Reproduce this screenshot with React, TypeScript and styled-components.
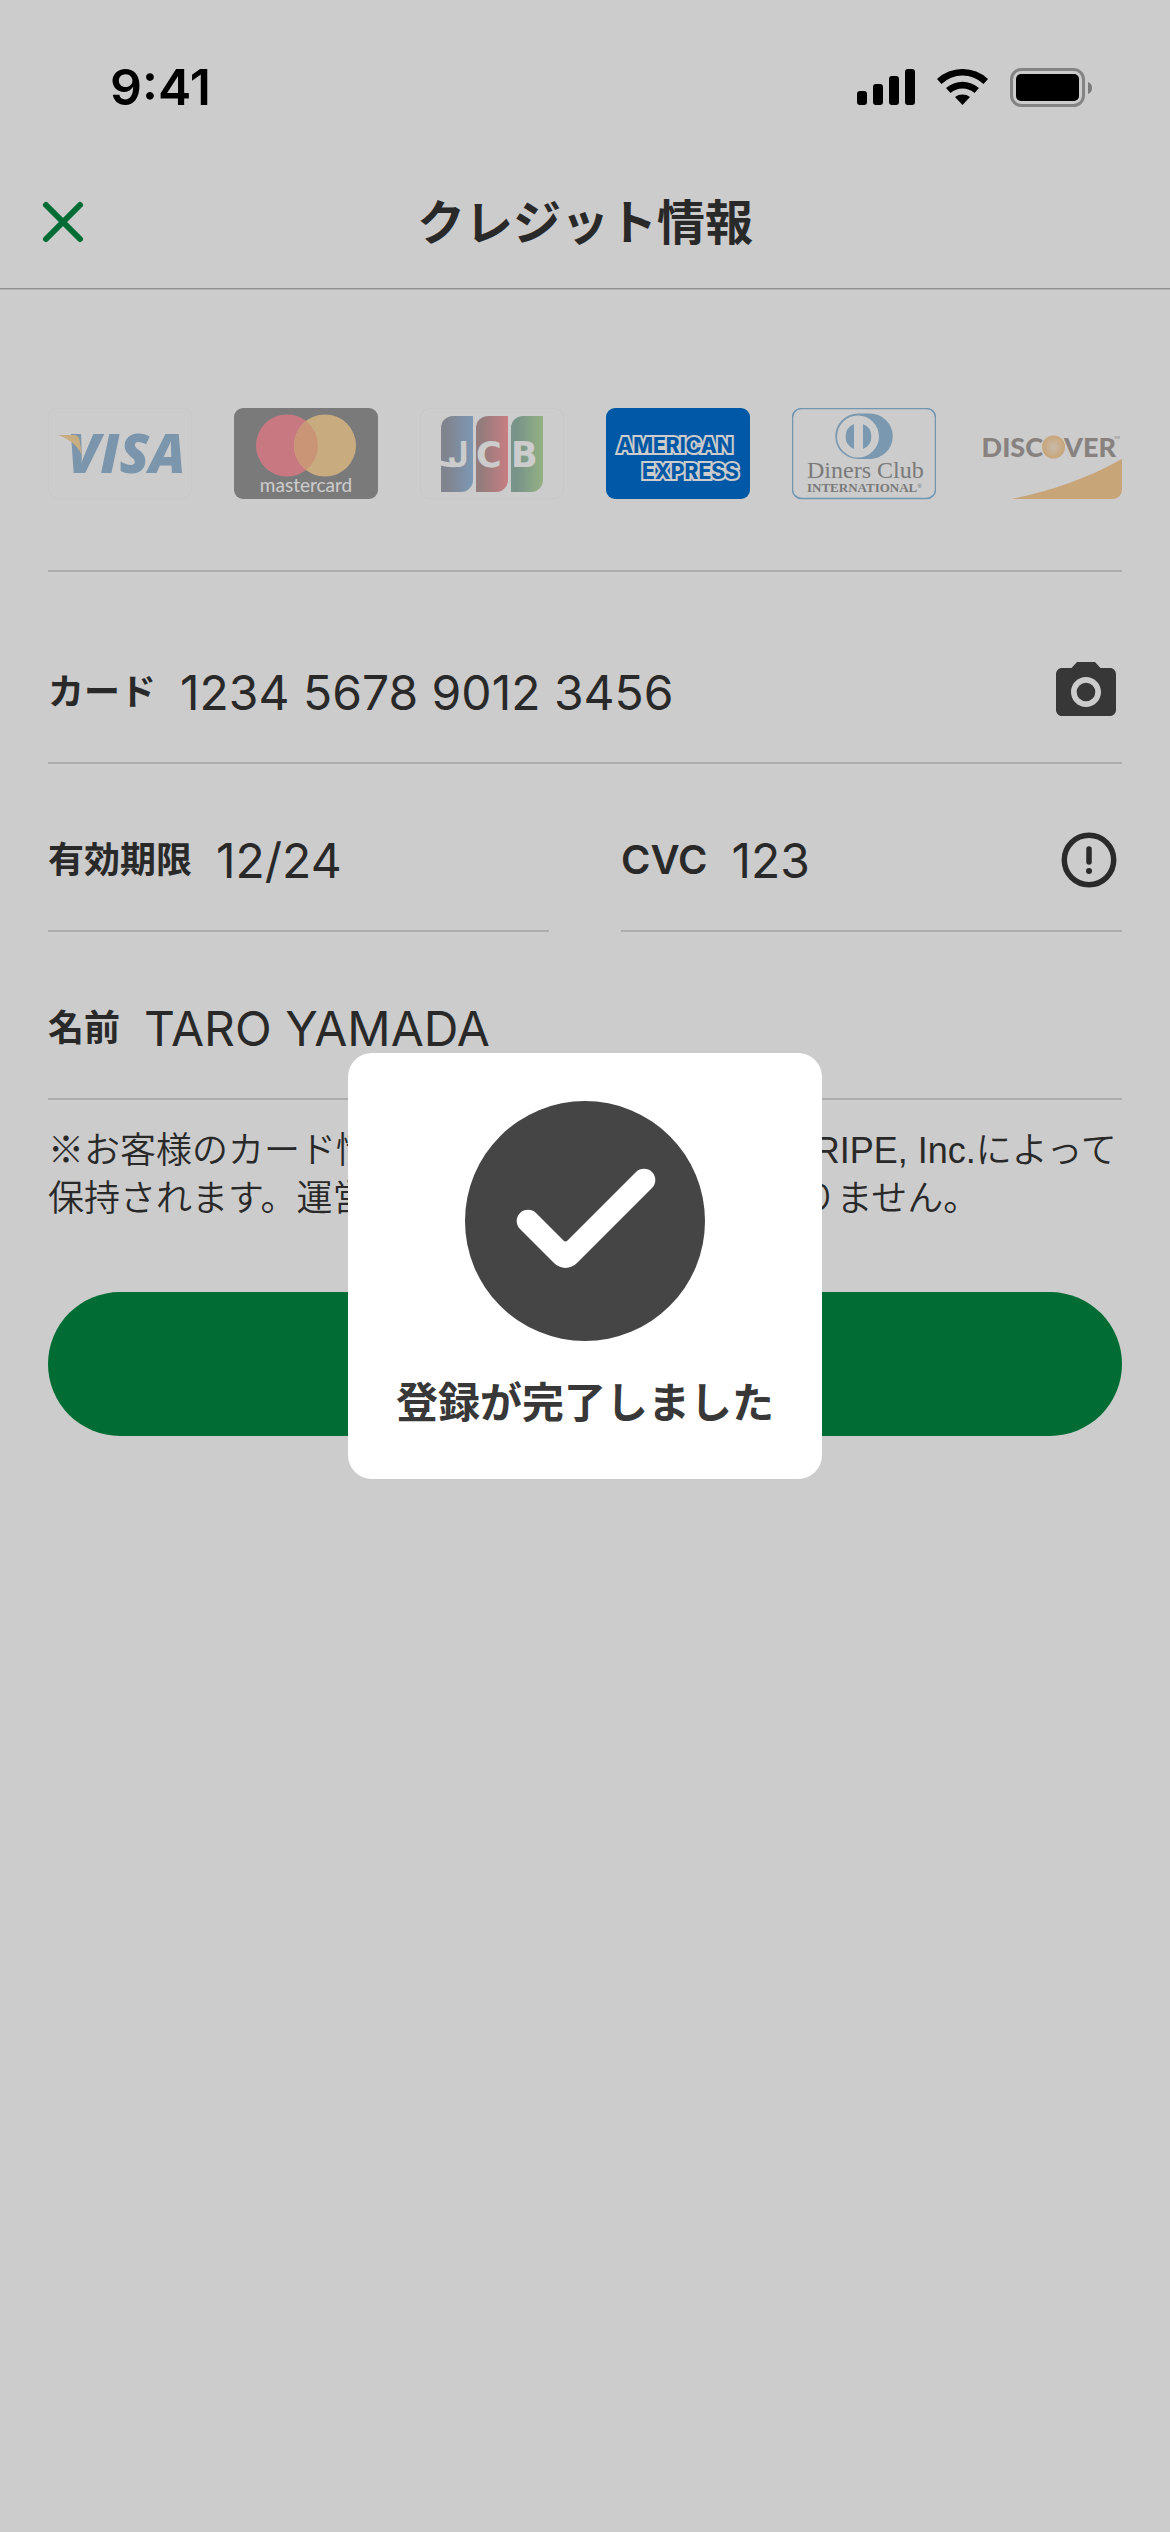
import React from "react";
import styled, { createGlobalStyle } from "styled-components";

const jp = '"Noto Sans CJK JP", sans-serif';

const GlobalStyle = createGlobalStyle`
  *, *::before, *::after { box-sizing: border-box; }
  body {
    margin: 0;
    background: #ffffff;
    color: #343434;
    font-family: "Liberation Sans", ${jp};
  }
`;

const Page = styled.div`
  min-height: 100vh;
  display: flex;
  flex-direction: column;
`;

const StatusBar = styled.div`
  height: 156px;
  padding: 18px 78px 0 110px;
  display: flex;
  align-items: center;
  justify-content: space-between;
  color: #000000;
`;

const Clock = styled.time`
  font-family: Inter, sans-serif;
  font-size: 50px;
  font-weight: 600;
  line-height: 60px;
`;

const StatusIcons = styled.div`
  display: flex;
  align-items: center;
  gap: 22px;
`;

const Header = styled.header`
  height: 133px;
  padding: 0 36px;
  display: grid;
  grid-template-columns: 54px 1fr 54px;
  align-items: center;
  border-bottom: 1px solid #b3b3b3;
  box-shadow: 0 1px 0 #e2e2e2;
`;

const IconButton = styled.button`
  flex: none;
  display: flex;
  padding: 0;
  border: 0;
  background: none;
  color: #454545;
  cursor: pointer;
`;

const Title = styled.h1`
  margin: 0;
  padding-bottom: 6px;
  font-family: ${jp};
  font-size: 48px;
  line-height: 72px;
  font-weight: 700;
  text-align: center;
`;

const Main = styled.main`
  padding: 119px 48px 48px;
`;

const Brands = styled.ul`
  margin: 0;
  padding: 0 0 70px;
  display: flex;
  justify-content: space-between;
  list-style: none;
  border-bottom: 2px solid #d9d9d9;
`;

const Brand = styled.li`
  display: flex;
`;

const Form = styled.form`
  padding-top: 24px;
`;

const FieldRow = styled.div`
  display: flex;
  gap: 72px;
`;

const Field = styled.div`
  flex: 1;
  min-width: 0;
  height: 168px;
  padding-top: 26px;
  display: flex;
  align-items: center;
  gap: 24px;
  border-bottom: 2px solid #d9d9d9;
`;

const Label = styled.label<{ $latin?: boolean }>`
  flex: none;
  font-family: Inter, ${jp};
  font-size: ${(p) => (p.$latin ? 40 : 36)}px;
  line-height: 54px;
  font-weight: ${(p) => (p.$latin ? 600 : 700)};
`;

const Input = styled.input`
  flex: 1;
  min-width: 0;
  height: 72px;
  padding: 0;
  border: 0;
  outline: 0;
  background: none;
  color: inherit;
  font-family: Inter, ${jp};
  font-size: 48px;
`;

const Note = styled.p`
  margin: 27px 0 69px;
  font-size: 36px;
  line-height: 48px;
  font-weight: 350;
`;

const Submit = styled.button`
  display: block;
  width: 100%;
  height: 144px;
  border: 0;
  border-radius: 72px;
  background: #028941;
  cursor: pointer;
`;

const Backdrop = styled.div`
  position: fixed;
  inset: 0;
  display: flex;
  align-items: center;
  justify-content: center;
  background: rgba(0, 0, 0, 0.2);
`;

const Dialog = styled.div`
  padding: 48px;
  display: flex;
  flex-direction: column;
  align-items: center;
  gap: 27px;
  border-radius: 24px;
  background: #ffffff;
`;

const Message = styled.p`
  margin: 0;
  color: #383838;
  font-family: ${jp};
  font-size: 42px;
  line-height: 63px;
  font-weight: 700;
`;

function SignalIcon() {
  return (
    <svg width="58" height="36" viewBox="0 0 58 36" aria-hidden="true">
      <rect x="0" y="22" width="10" height="14" rx="3" />
      <rect x="16" y="15" width="10" height="21" rx="3" />
      <rect x="32" y="7" width="10" height="29" rx="3" />
      <rect x="48" y="0" width="10" height="36" rx="3" />
    </svg>
  );
}

function WifiIcon() {
  return (
    <svg width="51" height="36" viewBox="0 0 51 36" aria-hidden="true">
      <path d="M0 10A37.500 37.500 0 0 1 51 10L46.500 14.900A30.500 30.500 0 0 0 4.500 14.900Z" />
      <path d="M9 19A25 25 0 0 1 42 19L37.500 24A18 18 0 0 0 13.500 24Z" />
      <path d="M18 28A13 13 0 0 1 33 28L25.500 36Z" />
    </svg>
  );
}

function BatteryIcon() {
  return (
    <svg width="82" height="39" viewBox="0 0 82 39" aria-hidden="true">
      <rect x="1.500" y="1.500" width="72" height="36" rx="10" fill="none" stroke="#000" strokeOpacity="0.35" strokeWidth="3" />
      <rect x="6" y="6" width="63" height="27" rx="5" />
      <path d="M78 14a6.500 6.500 0 0 1 0 12z" fillOpacity="0.4" />
    </svg>
  );
}

function CloseIcon() {
  return (
    <svg width="54" height="54" viewBox="0 0 54 54" aria-hidden="true">
      <path d="M10 10L44 44M44 10L10 44" stroke="#028941" strokeWidth="6" strokeLinecap="round" />
    </svg>
  );
}

function CameraIcon() {
  return (
    <svg width="72" height="72" viewBox="0 0 24 24" fill="currentColor" aria-hidden="true">
      <circle cx="12" cy="12" r="3.100" />
      <path
        fillRule="evenodd"
        d="M9 2L7.170 4H4c-1.100 0-2 .9-2 2v12c0 1.100.9 2 2 2h16c1.100 0 2-.9 2-2V6c0-1.100-.9-2-2-2h-3.170L15 2H9zm3 15c-2.760 0-5-2.240-5-5s2.240-5 5-5 5 2.240 5 5-2.240 5-5 5z"
      />
    </svg>
  );
}

function InfoIcon() {
  return (
    <svg width="66" height="66" viewBox="0 0 66 66" fill="none" stroke="#353535" aria-hidden="true">
      <circle cx="33" cy="33" r="24.700" strokeWidth="5.500" />
      <path d="M33 22V35" strokeWidth="5.500" strokeLinecap="round" />
      <circle cx="33" cy="44" r="3" fill="#353535" stroke="none" />
    </svg>
  );
}

function CheckIcon() {
  return (
    <svg width="240" height="240" viewBox="0 0 240 240" aria-hidden="true">
      <circle cx="120" cy="120" r="120" fill="#454545" />
      <path
        fill="#fff"
        d="M71 112L98.500 139.500Q100.500 141.500 102.500 139.500L171 71A11.300 11.300 0 0 1 187 87L112 162A16 16 0 0 1 89 162L55 128A11.300 11.300 0 0 1 71 112Z"
      />
    </svg>
  );
}

function CardLogo({ label, children }: { label: string; children: React.ReactNode }) {
  return (
    <svg width="144" height="92" viewBox="0 0 144 92" role="img" aria-label={label}>
      {children}
    </svg>
  );
}

function VisaLogo() {
  return (
    <CardLogo label="Visa">
      <rect x="0.500" y="0.500" width="143" height="90" rx="9" fill="none" stroke="#fafafa" />
      <text x="19" y="65" fontFamily="Open Sans" fontWeight="800" fontStyle="italic" fontSize="54" fill="#99bbd7">
        VISA
      </text>
      <path d="M10 27H25C29 27 31 29 31.500 32L34 47C29 37 21 31 10 27Z" fill="#fad9a0" />
    </CardLogo>
  );
}

function MastercardLogo() {
  return (
    <CardLogo label="Mastercard">
      <rect width="144" height="91" rx="9" fill="#999999" />
      <circle cx="53" cy="37.500" r="31" fill="#fb97a2" />
      <circle cx="91" cy="37.500" r="31" fill="#fbd8a0" />
      <path d="M72 13a31 31 0 0 1 0 49a31 31 0 0 1 0-49z" fill="#fdba94" />
      <text x="72" y="84" textAnchor="middle" fontFamily="Lato" fontWeight="400" fontSize="19" fill="#fff">
        mastercard
      </text>
    </CardLogo>
  );
}

const jcbPanels = [
  { id: "jcb-blue", x: 21, from: "#a0a6b3", to: "#9dbee2" },
  { id: "jcb-red", x: 56, from: "#bb9b9b", to: "#fb9ea4" },
  { id: "jcb-green", x: 91, from: "#96baac", to: "#badda5" },
];

function JcbLogo() {
  const letter = { y: 59, fontWeight: 700, fontSize: 35, fill: "#fff" };
  return (
    <CardLogo label="JCB">
      <rect x="0.500" y="0.500" width="143" height="90" rx="9" fill="none" stroke="#fafafa" />
      {jcbPanels.map((p) => (
        <g key={p.id}>
          <linearGradient id={p.id}>
            <stop offset="0.2" stopColor={p.from} />
            <stop offset="1" stopColor={p.to} />
          </linearGradient>
          <path d={`M${p.x} 20a12 12 0 0 1 12-12h20v64a12 12 0 0 1-12 12h-20z`} fill={`url(#${p.id})`} />
        </g>
      ))}
      <path d="M21 52.500C26 54 31 55 36 54V59C31 59.500 26 59 21 57.500Z" fill="#fff" />
      <text x="28" fontFamily="Inter" {...letter}>J</text>
      <text x="56" fontFamily="DejaVu Sans" {...letter}>C</text>
      <text x="91" fontFamily="DejaVu Sans" {...letter}>B</text>
    </CardLogo>
  );
}

function AmexLogo() {
  const line = {
    fontFamily: "Inter",
    fontWeight: 800,
    fontSize: 21,
    fill: "#006fd0",
    stroke: "#fff",
    strokeWidth: 4,
    paintOrder: "stroke",
  };
  return (
    <CardLogo label="American Express">
      <rect width="144" height="91" rx="9" fill="#006fd0" />
      <text x="11" y="45" {...line}>AMERICAN</text>
      <text x="36" y="71" {...line}>EXPRESS</text>
    </CardLogo>
  );
}

function DinersLogo() {
  return (
    <CardLogo label="Diners Club International">
      <rect x="0.500" y="0.500" width="143" height="90" rx="9" fill="none" stroke="#8fbbdd" strokeWidth="1.500" />
      <path d="M66 5.500H78A22.700 22.700 0 0 1 78 51H66A22.700 22.700 0 0 1 66 5.500Z" fill="#99c0dc" />
      <circle cx="66" cy="28.500" r="21" fill="#fff" />
      <path d="M62 16v25a13.500 13.500 0 0 1 0-25zM71 16a13.500 13.500 0 0 1 0 25z" fill="#99c0dc" />
      <text x="15" y="70" fontFamily="Liberation Serif" fontSize="24" fill="#999999">
        Diners Club
      </text>
      <text x="15" y="84" fontFamily="Liberation Serif" fontWeight="700" fontSize="13" fill="#999999">
        INTERNATIONAL
        <tspan dy="-4" fontSize="6">®</tspan>
      </text>
    </CardLogo>
  );
}

function DiscoverLogo() {
  const word = { y: 49, fontFamily: "Lato", fontWeight: 900, fontSize: 27, fill: "#a9a3a0" };
  return (
    <CardLogo label="Discover">
      <radialGradient id="discover-disc">
        <stop offset="0" stopColor="#fbe9d6" />
        <stop offset="1" stopColor="#fbcf98" />
      </radialGradient>
      <text x="65" textAnchor="end" {...word}>DISC</text>
      <circle cx="75.500" cy="39" r="11.500" fill="url(#discover-disc)" />
      <text x="86" {...word}>VER</text>
      <text x="136" y="31" fontFamily="Lato" fontSize="4" fill="#a9a3a0">TM</text>
      <path d="M33 91C70 84 108 71 144 51V82a9 9 0 0 1-9 9Z" fill="#fbcf98" />
    </CardLogo>
  );
}

const brands = [VisaLogo, MastercardLogo, JcbLogo, AmexLogo, DinersLogo, DiscoverLogo];

function TextField({
  id,
  label,
  value,
  latin,
  children,
}: {
  id: string;
  label: string;
  value: string;
  latin?: boolean;
  children?: React.ReactNode;
}) {
  return (
    <Field>
      <Label htmlFor={id} $latin={latin}>
        {label}
      </Label>
      <Input id={id} defaultValue={value} />
      {children}
    </Field>
  );
}

export default function App() {
  return (
    <>
      <GlobalStyle />
      <Page>
        <StatusBar>
          <Clock>9:41</Clock>
          <StatusIcons>
            <SignalIcon />
            <WifiIcon />
            <BatteryIcon />
          </StatusIcons>
        </StatusBar>
        <Header>
          <IconButton type="button" aria-label="閉じる">
            <CloseIcon />
          </IconButton>
          <Title>クレジット情報</Title>
        </Header>
        <Main>
          <Brands>
            {brands.map((Logo, i) => (
              <Brand key={i}>
                <Logo />
              </Brand>
            ))}
          </Brands>
          <Form onSubmit={(e) => e.preventDefault()}>
            <TextField id="number" label="カード" value="1234 5678 9012 3456">
              <IconButton type="button" aria-label="カードを撮影">
                <CameraIcon />
              </IconButton>
            </TextField>
            <FieldRow>
              <TextField id="expiry" label="有効期限" value="12/24" />
              <TextField id="cvc" label="CVC" value="123" latin>
                <IconButton type="button" aria-label="CVCについて">
                  <InfoIcon />
                </IconButton>
              </TextField>
            </FieldRow>
            <TextField id="name" label="名前" value="TARO YAMADA" />
            <Note>
              ※お客様のカード情報は決済代行会社であるSTRIPE, Inc.によって保持されます。運営会社側が保持することはありません。
            </Note>
            <Submit type="submit" aria-label="登録する" />
          </Form>
        </Main>
      </Page>
      <Backdrop>
        <Dialog role="dialog" aria-modal="true" aria-labelledby="done-message">
          <CheckIcon />
          <Message id="done-message">登録が完了しました</Message>
        </Dialog>
      </Backdrop>
    </>
  );
}
